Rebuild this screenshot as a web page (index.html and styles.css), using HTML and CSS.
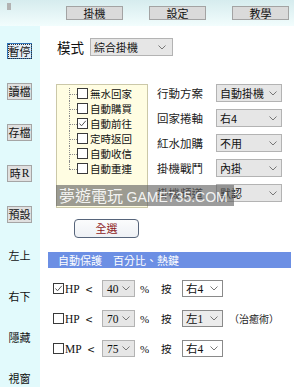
FILE: index.html
```html
<!DOCTYPE html>
<html lang="zh-Hant">
<head>
<meta charset="utf-8">
<title>掛機設定</title>
<link rel="stylesheet" href="styles.css">
</head>
<body>
<div class="app">
  <header class="topbar">
    <span class="grip"></span>
    <button class="tbtn first">掛機</button>
    <button class="tbtn">設定</button>
    <button class="tbtn">教學</button>
  </header>
  <div class="body">
    <nav class="side">
      <button class="sbtn active"><span class="focus">暫停</span></button>
      <button class="sbtn">讀檔</button>
      <button class="sbtn">存檔</button>
      <button class="sbtn">時<span class="serif">R</span></button>
      <button class="sbtn">預設</button>
      <span class="slink">左上</span>
      <span class="slink">右下</span>
      <span class="slink">隱藏</span>
      <span class="slink">視窗</span>
    </nav>
    <main class="main">
      <div class="mode-row">
        <span class="mode-label">模式</span>
        <div class="sel sel-mode"><span>綜合掛機</span><svg class="chev" width="8" height="5" viewBox="0 0 8 5"><polyline points="0.5,0.5 4,4 7.5,0.5" fill="none" stroke="#777" stroke-width="1"/></svg></div>
      </div>
      <div class="settings">
        <div class="tree-box">
          <div class="node"><span class="cb"></span><span class="lbl">無水回家</span></div>
          <div class="node"><span class="cb"></span><span class="lbl">自動購買</span></div>
          <div class="node"><span class="cb"><svg width="9" height="9" viewBox="0 0 9 9"><polyline points="1.5,4.5 3.5,6.8 7.8,1.8" fill="none" stroke="#555" stroke-width="1"/></svg></span><span class="lbl">自動前往</span></div>
          <div class="node"><span class="cb"></span><span class="lbl">定時返回</span></div>
          <div class="node"><span class="cb"></span><span class="lbl">自動收信</span></div>
          <div class="node"><span class="cb"></span><span class="lbl">自動重連</span></div>
        </div>
        <div class="opts">
          <div class="opt"><span class="olbl">行動方案</span><div class="sel sel-opt"><span>自動掛機</span><svg class="chev" width="8" height="5" viewBox="0 0 8 5"><polyline points="0.5,0.5 4,4 7.5,0.5" fill="none" stroke="#777" stroke-width="1"/></svg></div></div>
          <div class="opt"><span class="olbl">回家捲軸</span><div class="sel sel-opt"><span>右4</span><svg class="chev" width="8" height="5" viewBox="0 0 8 5"><polyline points="0.5,0.5 4,4 7.5,0.5" fill="none" stroke="#777" stroke-width="1"/></svg></div></div>
          <div class="opt"><span class="olbl">紅水加購</span><div class="sel sel-opt"><span>不用</span><svg class="chev" width="8" height="5" viewBox="0 0 8 5"><polyline points="0.5,0.5 4,4 7.5,0.5" fill="none" stroke="#777" stroke-width="1"/></svg></div></div>
          <div class="opt"><span class="olbl">掛機戰鬥</span><div class="sel sel-opt"><span>內掛</span><svg class="chev" width="8" height="5" viewBox="0 0 8 5"><polyline points="0.5,0.5 4,4 7.5,0.5" fill="none" stroke="#777" stroke-width="1"/></svg></div></div>
          <div class="opt"><span class="olbl">掛機頻道</span><div class="sel sel-opt"><span>默認</span><svg class="chev" width="8" height="5" viewBox="0 0 8 5"><polyline points="0.5,0.5 4,4 7.5,0.5" fill="none" stroke="#777" stroke-width="1"/></svg></div></div>
        </div>
      </div>
      <button class="all">全選</button>
      <div class="bar">自動保護　百分比、熱鍵</div>
      <div class="prot">
        <div class="prow">
          <span class="cb pcb"><svg width="9" height="9" viewBox="0 0 9 9"><polyline points="1.5,4.5 3.5,6.8 7.8,1.8" fill="none" stroke="#555" stroke-width="1"/></svg></span>
          <span class="plbl">HP<span class="lt">&lt;</span></span>
          <div class="sel sel-pct"><span>40</span><svg class="chev" width="8" height="5" viewBox="0 0 8 5"><polyline points="0.5,0.5 4,4 7.5,0.5" fill="none" stroke="#777" stroke-width="1"/></svg></div>
          <span class="pc">%</span>
          <span class="an">按</span>
          <div class="sel sel-key"><span>右4</span><svg class="chev" width="8" height="5" viewBox="0 0 8 5"><polyline points="0.5,0.5 4,4 7.5,0.5" fill="none" stroke="#777" stroke-width="1"/></svg></div>
        </div>
        <div class="prow">
          <span class="cb pcb"></span>
          <span class="plbl">HP<span class="lt">&lt;</span></span>
          <div class="sel sel-pct"><span>70</span><svg class="chev" width="8" height="5" viewBox="0 0 8 5"><polyline points="0.5,0.5 4,4 7.5,0.5" fill="none" stroke="#777" stroke-width="1"/></svg></div>
          <span class="pc">%</span>
          <span class="an">按</span>
          <div class="sel sel-key gray"><span>左1</span><svg class="chev" width="8" height="5" viewBox="0 0 8 5"><polyline points="0.5,0.5 4,4 7.5,0.5" fill="none" stroke="#777" stroke-width="1"/></svg></div>
          <span class="note">（治癒術）</span>
        </div>
        <div class="prow">
          <span class="cb pcb"></span>
          <span class="plbl">MP<span class="lt">&lt;</span></span>
          <div class="sel sel-pct"><span>75</span><svg class="chev" width="8" height="5" viewBox="0 0 8 5"><polyline points="0.5,0.5 4,4 7.5,0.5" fill="none" stroke="#777" stroke-width="1"/></svg></div>
          <span class="pc">%</span>
          <span class="an">按</span>
          <div class="sel sel-key"><span>右4</span><svg class="chev" width="8" height="5" viewBox="0 0 8 5"><polyline points="0.5,0.5 4,4 7.5,0.5" fill="none" stroke="#777" stroke-width="1"/></svg></div>
        </div>
      </div>
      <div class="watermark">夢遊電玩 <span class="wm-latin">GAME735.COM</span></div>
    </main>
  </div>
</div>
</body>
</html>
```

FILE: styles.css
```css
* { box-sizing: border-box; }

html, body {
  margin: 0;
  padding: 0;
}

body {
  width: 294px;
  height: 387px;
  overflow: hidden;
  background: #fff;
  color: #111;
  font-family: "Noto Sans CJK TC", "Noto Sans", sans-serif;
  font-size: 11px;
}

.app {
  display: flex;
  flex-direction: column;
  height: 387px;
}

/* top bar */
.topbar {
  height: 26px;
  flex: none;
  display: flex;
  align-items: flex-start;
  background: linear-gradient(#d6ecee, #f2fdfd);
}

.grip {
  width: 4px;
  height: 7px;
  margin: 3px 0 0 7px;
  background: #b2b2b2;
}

.tbtn {
  width: 57px;
  height: 14px;
  margin: 6px 0 0 26px;
  padding: 0;
  border: 1px solid #a3a3a3;
  background: #dadada;
  color: #111;
  font-family: inherit;
  font-size: 11px;
  line-height: 12px;
}

.tbtn.first { margin-left: 55px; }

/* body */
.body {
  flex: 1;
  display: flex;
  min-height: 0;
}

.side {
  width: 40px;
  flex: none;
  background: #e2fafc;
  padding: 17px 0 0 7px;
  display: flex;
  flex-direction: column;
  gap: 24px;
}

.sbtn {
  width: 25px;
  height: 17px;
  padding: 0;
  border: 1px solid #a5a5a5;
  background: #e0e0e0;
  color: #111;
  font-family: inherit;
  font-size: 11px;
  line-height: 15px;
  display: flex;
  align-items: center;
  justify-content: center;
}

.sbtn .serif {
  font-family: "Liberation Serif", serif;
  font-size: 11.5px;
  margin-left: 1px;
}

.sbtn.active {
  border: 1px solid #2f73b8;
  background: #e4eef6;
}

.sbtn .focus {
  display: block;
  outline: 1px dotted #333;
  line-height: 13px;
}

.slink {
  width: 25px;
  height: 17px;
  line-height: 17px;
  text-align: center;
  font-size: 11px;
  color: #111;
}

.main {
  flex: 1;
  position: relative;
  background: #fff;
}

/* mode */
.mode-row {
  display: flex;
  align-items: center;
  margin: 12px 0 0 17px;
  height: 18px;
}

.mode-label {
  width: 33px;
  font-size: 13.5px;
  line-height: 18px;
  color: #111;
}

.sel {
  display: flex;
  align-items: center;
  justify-content: space-between;
  height: 18px;
  padding: 0 4px 0 3px;
  border: 1px solid #b3b3b3;
  background: #e6e6e6;
  font-size: 11px;
  line-height: 16px;
  color: #111;
}

.sel-mode { width: 83px; padding-right: 6px; }

/* settings */
.settings {
  display: flex;
  align-items: flex-start;
  margin-top: 28px;
}

.tree-box {
  margin-left: 16px;
  width: 92px;
  height: 124px;
  border: 1px solid #cbc8a8;
  background: #fffde2;
  padding-top: 1px;
}

.node {
  position: relative;
  height: 15px;
  display: flex;
  align-items: center;
  padding-left: 20px;
}

.node::before {
  content: "";
  position: absolute;
  left: 12px;
  top: 0;
  bottom: 0;
  border-left: 1px dotted #8a8a8a;
}

.node:first-child::before { top: 2px; }
.node:last-child::before { bottom: 50%; }

.node::after {
  content: "";
  position: absolute;
  left: 12px;
  width: 8px;
  top: 50%;
  border-top: 1px dotted #8a8a8a;
}

.cb {
  width: 11px;
  height: 11px;
  flex: none;
  border: 1px solid #3a3a3a;
  background: #fff;
  display: flex;
  align-items: center;
  justify-content: center;
}

.lbl {
  margin-left: 2px;
  font-size: 10.5px;
  line-height: 15px;
  color: #111;
}

.opts {
  margin-left: 9px;
  display: flex;
  flex-direction: column;
  gap: 7px;
}

.opt {
  display: flex;
  align-items: center;
  height: 18px;
}

.olbl {
  width: 59px;
  font-size: 11.5px;
  color: #222;
}

.sel-opt { width: 66px; }

/* select all */
.all {
  display: block;
  margin: 11px 0 0 34px;
  width: 65px;
  height: 19px;
  padding: 0;
  border: 1px solid #56647a;
  border-radius: 4px;
  background: linear-gradient(#fbfcfd, #eef1f5);
  color: #8e1b1b;
  font-family: inherit;
  font-size: 11px;
  line-height: 17px;
}

/* protection bar */
.bar {
  margin: 14px 0 0 8px;
  width: 243px;
  height: 16px;
  background: #6c8fe4;
  color: #fff;
  font-size: 11px;
  line-height: 16px;
  padding-left: 10px;
}

.prot {
  margin-top: 12px;
  display: flex;
  flex-direction: column;
  gap: 13px;
}

.prow {
  display: flex;
  align-items: center;
  height: 17px;
  padding-left: 13px;
  font-family: "Liberation Serif", "Noto Sans CJK TC", serif;
}

.pcb { width: 11px; height: 11px; }

.plbl {
  width: 38px;
  padding-left: 1px;
  font-size: 11.5px;
  color: #111;
  display: flex;
  align-items: center;
}

.lt {
  margin-left: 6px;
  font-family: "Noto Sans CJK TC", sans-serif;
  font-size: 12px;
}

.sel-pct {
  width: 33px;
  height: 17px;
  font-family: "Liberation Serif", serif;
  font-size: 11.5px;
  padding-left: 4px;
}

.pc {
  width: 26px;
  padding-left: 5px;
  font-size: 11px;
}

.an {
  width: 21px;
  font-family: "Noto Sans CJK TC", sans-serif;
  font-size: 10.5px;
}

.sel-key {
  width: 41px;
  height: 17px;
  background: #fff;
  border-color: #8a8a8a;
  font-family: "Liberation Serif", "Noto Sans CJK TC", serif;
  font-size: 11.5px;
}

.sel-key.gray { background: #ececec; }

.note {
  margin-left: 6px;
  font-family: "Noto Sans CJK TC", sans-serif;
  font-size: 10px;
  color: #222;
}

/* watermark overlay */
.watermark {
  position: absolute;
  left: 16px;
  top: 159px;
  width: 178px;
  height: 21px;
  background: rgba(95, 95, 95, 0.62);
  color: rgba(255, 255, 255, 0.9);
  font-family: "Noto Sans CJK TC", "Liberation Sans", sans-serif;
  font-size: 16px;
  line-height: 21px;
  padding-left: 3px;
  white-space: nowrap;
}

.wm-latin {
  font-family: "Liberation Sans", sans-serif;
  font-size: 14px;
}
```
